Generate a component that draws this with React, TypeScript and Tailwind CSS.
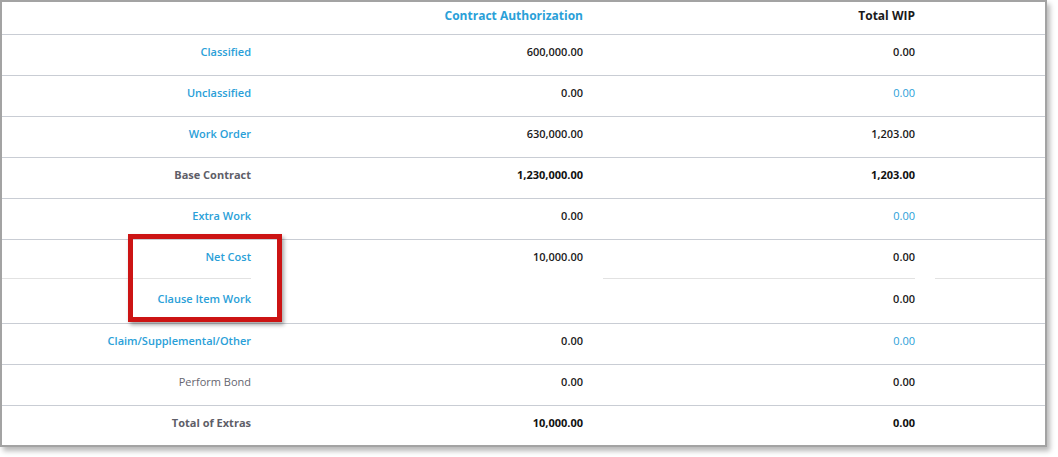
import React from "react";

type Cell = { text: string; tone: "blue" | "black" | "gray" | "grayBold" | "blackBold" | "blueNormal" };

const toneCls: Record<Cell["tone"], string> = {
  blue: "text-[#2aa0d8] font-semibold",
  black: "text-[#1a1a1a] font-semibold",
  blackBold: "text-[#111] font-bold",
  gray: "text-[#66666f] font-medium",
  grayBold: "text-[#5e5e68] font-bold",
  blueNormal: "text-[#2aa0d8] font-medium",
};

type Row = { label: Cell; ca: Cell | null; wip: Cell };

const rows: Row[] = [
  { label: { text: "Classified", tone: "blue" }, ca: { text: "600,000.00", tone: "black" }, wip: { text: "0.00", tone: "black" } },
  { label: { text: "Unclassified", tone: "blue" }, ca: { text: "0.00", tone: "black" }, wip: { text: "0.00", tone: "blueNormal" } },
  { label: { text: "Work Order", tone: "blue" }, ca: { text: "630,000.00", tone: "black" }, wip: { text: "1,203.00", tone: "black" } },
  { label: { text: "Base Contract", tone: "grayBold" }, ca: { text: "1,230,000.00", tone: "blackBold" }, wip: { text: "1,203.00", tone: "blackBold" } },
  { label: { text: "Extra Work", tone: "blue" }, ca: { text: "0.00", tone: "black" }, wip: { text: "0.00", tone: "blueNormal" } },
];

const rows2: Row[] = [
  { label: { text: "Claim/Supplemental/Other", tone: "blue" }, ca: { text: "0.00", tone: "black" }, wip: { text: "0.00", tone: "blueNormal" } },
  { label: { text: "Perform Bond", tone: "gray" }, ca: { text: "0.00", tone: "black" }, wip: { text: "0.00", tone: "black" } },
  { label: { text: "Total of Extras", tone: "grayBold" }, ca: { text: "10,000.00", tone: "blackBold" }, wip: { text: "0.00", tone: "blackBold" } },
];

function T({ c }: { c: Cell | null }) {
  if (!c) return null;
  return <span className={toneCls[c.tone]}>{c.text}</span>;
}

function DataRow({ r, last }: { r: Row; last?: boolean }) {
  return (
    <div className={`flex shrink-0 items-start pt-[9px] ${last ? "h-[39px]" : "h-[41px] border-b border-[#c9cdd4]"}`}>
      <div className="w-[261px] pr-3 text-right"><T c={r.label} /></div>
      <div className="w-[332px] pr-3 text-right"><T c={r.ca} /></div>
      <div className="w-[332px] pr-3 text-right"><T c={r.wip} /></div>
    </div>
  );
}

export default function App() {
  return (
    <div
      className="relative w-[1058px] h-[457px] bg-white text-[11px] leading-[16px]"
      style={{ fontFamily: '"Open Sans", "Noto Sans", sans-serif' }}
    >
      <div className="w-[1047px] h-[447px] border-2 border-[#a3a3a3] bg-white shadow-[3px_4px_5px_rgba(0,0,0,0.28)] flex flex-col">
        <div className="flex shrink-0 h-[33px] items-start pt-[6px] border-b border-[#c9cdd4] text-[12px]">
          <div className="w-[261px]" />
          <div className="w-[332px] pr-3 text-right font-bold text-[#2aa0d8]">Contract Authorization</div>
          <div className="w-[332px] pr-3 text-right font-bold text-[#1a1a1a]">Total WIP</div>
        </div>
        {rows.map((r) => (
          <DataRow key={r.label.text} r={r} />
        ))}
        <div className="flex shrink-0 flex-col h-[84px] border-b border-[#c9cdd4]">
          <div className="flex h-[39px]">
            <div className="w-[249px] text-right border-b border-[#e2e2e2] pt-[9px]">
              <span className={toneCls.blue}>Net Cost</span>
            </div>
            <div className="w-[344px] pr-3 text-right pt-[9px]">
              <span className={toneCls.black}>10,000.00</span>
            </div>
            <div className="w-[312px] ml-2 text-right border-b border-[#e2e2e2] pt-[9px]">
              <span className={toneCls.black}>0.00</span>
            </div>
            <div className="flex-1 ml-5 border-b border-[#e2e2e2]" />
          </div>
          <div className="flex flex-1 pt-[12px]">
            <div className="w-[261px] pr-3 text-right"><span className={toneCls.blue}>Clause Item Work</span></div>
            <div className="w-[332px]" />
            <div className="w-[332px] pr-3 text-right"><span className={toneCls.black}>0.00</span></div>
          </div>
        </div>
        {rows2.map((r, i) => (
          <DataRow key={r.label.text} r={r} last={i === rows2.length - 1} />
        ))}
      </div>
      <div className="absolute left-[128px] top-[234px] w-[154px] h-[88px] border-[5px] border-[#cc1414] shadow-[2px_3px_4px_rgba(0,0,0,0.35)]" />
    </div>
  );
}
